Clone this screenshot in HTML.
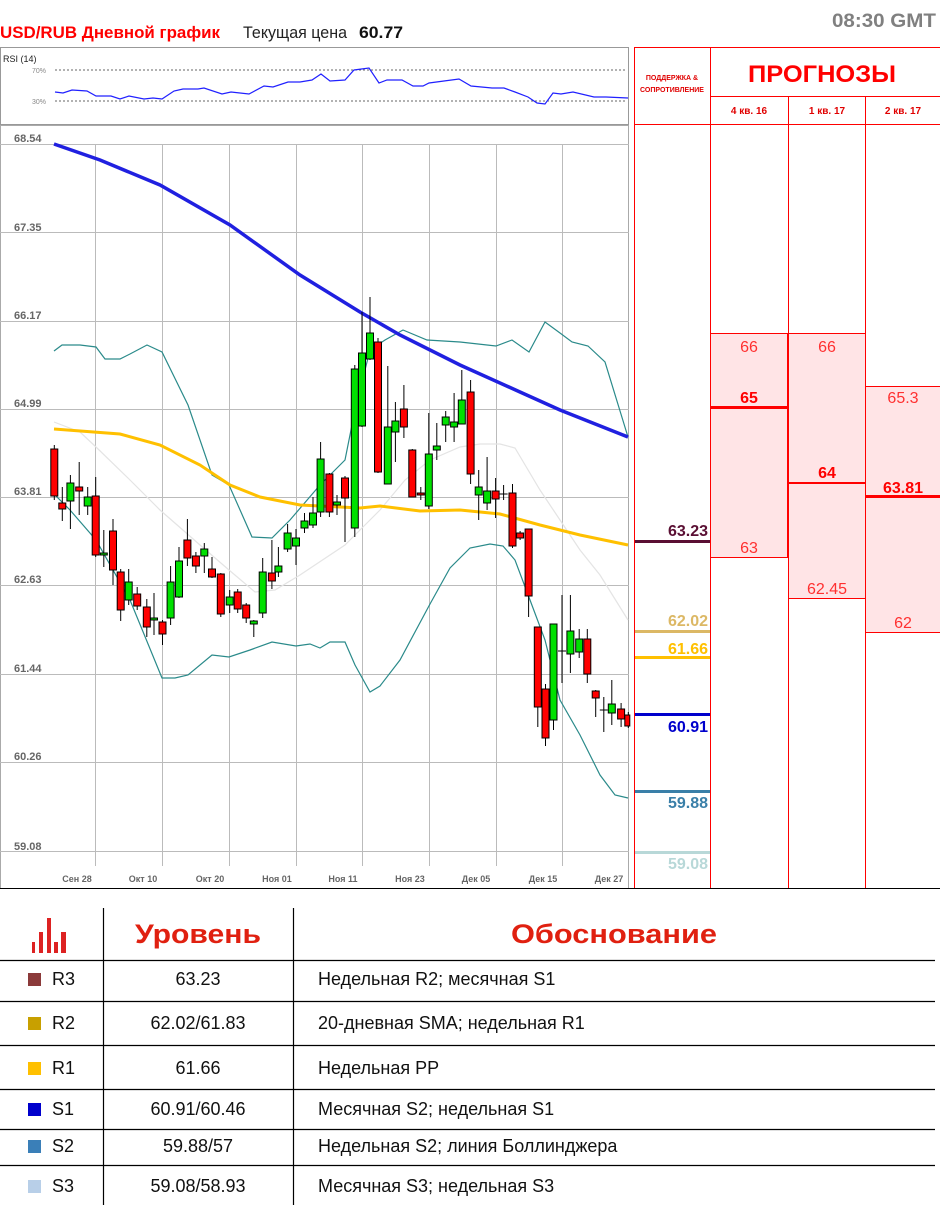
<!DOCTYPE html>
<html><head><meta charset="utf-8"><style>
html,body{margin:0;padding:0;background:#fff;width:940px;height:1209px;overflow:hidden}
svg{display:block}
text{font-family:"Liberation Sans","DejaVu Sans",sans-serif}
</style></head><body>
<svg width="940" height="1209" viewBox="0 0 940 1209" xmlns="http://www.w3.org/2000/svg">
<!-- header -->
<text x="0" y="38" font-size="17" font-weight="bold" fill="#ff0000" textLength="220" lengthAdjust="spacingAndGlyphs">USD/RUB Дневной график</text>
<text x="243" y="38" font-size="17" fill="#222" textLength="104" lengthAdjust="spacingAndGlyphs">Текущая цена</text>
<text x="359" y="38" font-size="17" font-weight="bold" fill="#111" textLength="44" lengthAdjust="spacingAndGlyphs">60.77</text>
<text x="936" y="27" font-size="19" font-weight="bold" fill="#808080" text-anchor="end" textLength="104" lengthAdjust="spacingAndGlyphs">08:30 GMT</text>

<!-- RSI panel -->
<rect x="0.5" y="47.5" width="628" height="77" fill="none" stroke="#999"/>
<text x="3" y="62" font-size="9" fill="#222">RSI (14)</text>
<text x="32" y="73" font-size="7" fill="#888">70%</text>
<text x="32" y="104" font-size="7" fill="#888">30%</text>
<line x1="55" y1="70" x2="626" y2="70" stroke="#666" stroke-dasharray="2,2"/>
<line x1="55" y1="101" x2="626" y2="101" stroke="#666" stroke-dasharray="2,2"/>
<polyline fill="none" stroke="#2020ff" stroke-width="1.2" points="55,92 63,93 72,90 87,91 96,96 111,96 120,99 129,96 144,99 153,98 162,99 174,91 183,89 198,89 204,88 222,94 231,92 249,94 264,86 273,87 288,82 300,82 312,80 321,74 330,81 345,80 354,70 369,68 379,83 387,80 402,80 413,86 423,86 429,83 444,81 459,79 471,86 492,88 504,88 515,92 528,97 537,103 545,104 553,93 561,94 573,92 594,97 606,97 628,98"/>

<!-- main chart box -->
<rect x="0.5" y="125.5" width="628" height="763" fill="none" stroke="#aaa"/>
<g stroke="#bbb" stroke-width="1">
<line x1="0" y1="144.5" x2="629" y2="144.5"/>
<line x1="0" y1="232.5" x2="629" y2="232.5"/>
<line x1="0" y1="321.5" x2="629" y2="321.5"/>
<line x1="0" y1="409.5" x2="629" y2="409.5"/>
<line x1="0" y1="497.5" x2="629" y2="497.5"/>
<line x1="0" y1="585.5" x2="629" y2="585.5"/>
<line x1="0" y1="674.5" x2="629" y2="674.5"/>
<line x1="0" y1="762.5" x2="629" y2="762.5"/>
<line x1="0" y1="851.5" x2="629" y2="851.5"/>
<line x1="95.5" y1="144" x2="95.5" y2="866"/>
<line x1="162.5" y1="144" x2="162.5" y2="866"/>
<line x1="229.5" y1="144" x2="229.5" y2="866"/>
<line x1="296.5" y1="144" x2="296.5" y2="866"/>
<line x1="362.5" y1="144" x2="362.5" y2="866"/>
<line x1="429.5" y1="144" x2="429.5" y2="866"/>
<line x1="496.5" y1="144" x2="496.5" y2="866"/>
<line x1="562.5" y1="144" x2="562.5" y2="866"/>
</g>
<g font-size="11" fill="#666" font-weight="bold">
<text x="14" y="142">68.54</text>
<text x="14" y="231">67.35</text>
<text x="14" y="319">66.17</text>
<text x="14" y="407">64.99</text>
<text x="14" y="495">63.81</text>
<text x="14" y="583">62.63</text>
<text x="14" y="672">61.44</text>
<text x="14" y="760">60.26</text>
<text x="14" y="850">59.08</text>
</g>
<g font-size="9" fill="#666" font-weight="bold" text-anchor="middle">
<text x="77" y="882">Сен 28</text>
<text x="143" y="882">Окт 10</text>
<text x="210" y="882">Окт 20</text>
<text x="277" y="882">Ноя 01</text>
<text x="343" y="882">Ноя 11</text>
<text x="410" y="882">Ноя 23</text>
<text x="476" y="882">Дек 05</text>
<text x="543" y="882">Дек 15</text>
<text x="609" y="882">Дек 27</text>
</g>

<!-- indicator lines -->
<polyline fill="none" stroke="#e4e4e4" stroke-width="1.2" points="54,422 80,432 96,447 130,480 160,510 200,545 229,570 255,592 275,590 300,575 330,555 345,545 360,530 380,510 405,480 430,460 460,447 480,444 500,444 515,448 540,490 560,520 580,550 600,575 628,620"/>
<polyline fill="none" stroke="#2a8a8a" stroke-width="1.2" points="54,351 62,345 80,345 96,347 105,359 120,359 130,354 147,345 162,352 188,405 212,475 229,485 252,537 272,538 290,520 320,485 345,460 355,410 370,350 385,340 403,330 427,340 460,342 496,346 512,340 529,352 545,322 560,333 572,342 588,346 605,362 628,437"/>
<polyline fill="none" stroke="#2a8a8a" stroke-width="1.2" points="54,494 70,510 96,540 130,600 162,678 175,678 188,675 212,655 229,657 250,650 272,642 296,646 310,644 320,648 330,642 345,642 355,665 370,692 380,686 400,660 430,604 450,568 470,548 490,544 503,546 515,560 530,600 545,640 560,700 580,735 600,775 615,795 628,798"/>
<polyline fill="none" stroke="#ffc000" stroke-width="3" points="54,429 120,434 160,445 200,465 230,485 260,497 300,505 360,508 380,506 420,511 460,510 500,514 540,525 580,535 628,545"/>
<polyline fill="none" stroke="#2020e0" stroke-width="3.5" points="54,144 100,160 160,185 230,225 300,275 360,312 400,335 460,365 520,392 560,410 628,437"/>

<!-- wicks -->
<path stroke="#000" stroke-width="1" fill="none" d="M54.3,445V500M62.3,487V521M70.4,475V529M79.2,462V515M87.7,487V515M95.7,477V557M103.8,530V567M113,519V585M120.7,569V621M128.7,569V605M137.2,587V610M146.8,599V637M154,593V635M162.5,620V645M170.6,566V625M179,547V598M187.4,519V566M195.9,552V573M204.3,543V573M212,557V578M220.8,573V617M229.7,590V613M237.7,589V613M246.2,603V623M253.8,620V637M262.7,558V618M271.9,540V589M278.4,547V577M287.6,524V552M296,529V565M304.5,513V533M313,497V528M320.6,442V517M329.4,473V517M337,495V515M345,476V542M354.8,365V537M362,312V427M370,297V360M378,338V473M387.8,366V484M395.4,402V462M403.9,385V438M412.3,449V497M420.8,487V500M428.8,413V509M436.8,423V460M445.7,411V442M454.1,393V442M461.8,370V424M470.6,380V484M478.7,470V520M487.1,457V510M495.6,478V518M503.6,485V500M499.6,494H507.6M512.5,484V548M520.1,531V540M528.6,529V617M537.8,627V727M545.5,684V746M553.5,624V730M562,595V683M558,651H566M570.4,595V673M579.2,629V658M587.3,629V683M595.7,690V717M603.8,697V732M599.8,710H607.8M611.8,680V725M621.1,703V727M628.3,712V728"/>
<!-- red bodies -->
<g fill="#ff0000" stroke="#000" stroke-width="1">
<rect x="50.8" y="449" width="7" height="47"/><rect x="58.8" y="503" width="7" height="6"/><rect x="75.7" y="487" width="7" height="4"/><rect x="92.2" y="496" width="7" height="59"/><rect x="109.5" y="531" width="7" height="39"/><rect x="117.2" y="572" width="7" height="38"/><rect x="133.7" y="594" width="7" height="12"/><rect x="143.3" y="607" width="7" height="20"/><rect x="159" y="622" width="7" height="12"/><rect x="183.9" y="540" width="7" height="18"/><rect x="192.4" y="556" width="7" height="10"/><rect x="208.5" y="569" width="7" height="8"/><rect x="217.3" y="574" width="7" height="40"/><rect x="234.2" y="592" width="7" height="17"/><rect x="242.7" y="605" width="7" height="13"/><rect x="268.4" y="573" width="7" height="8"/><rect x="325.9" y="474" width="7" height="38"/><rect x="341.5" y="478" width="7" height="20"/><rect x="374.5" y="342" width="7" height="130"/><rect x="400.4" y="409" width="7" height="18"/><rect x="408.8" y="450" width="7" height="47"/><rect x="417.3" y="493" width="7" height="2"/><rect x="467.1" y="392" width="7" height="82"/><rect x="492.1" y="491" width="7" height="8"/><rect x="509" y="493" width="7" height="53"/><rect x="516.6" y="533" width="7" height="5"/><rect x="525.1" y="529" width="7" height="67"/><rect x="534.3" y="627" width="7" height="80"/><rect x="542" y="689" width="7" height="49"/><rect x="583.8" y="639" width="7" height="35"/><rect x="592.2" y="691" width="7" height="7"/><rect x="617.6" y="709" width="7" height="10"/><rect x="624.8" y="715" width="5" height="11"/>
</g>
<!-- green bodies -->
<g fill="#00e000" stroke="#000" stroke-width="1">
<rect x="66.9" y="483" width="7" height="18"/><rect x="84.2" y="497" width="7" height="9"/><rect x="100.3" y="553" width="7" height="2"/><rect x="125.2" y="582" width="7" height="18"/><rect x="150.5" y="618" width="7" height="2"/><rect x="167.1" y="582" width="7" height="36"/><rect x="175.5" y="561" width="7" height="36"/><rect x="200.8" y="549" width="7" height="7"/><rect x="226.2" y="597" width="7" height="8"/><rect x="250.3" y="621" width="7" height="3"/><rect x="259.2" y="572" width="7" height="41"/><rect x="274.9" y="566" width="7" height="6"/><rect x="284.1" y="533" width="7" height="16"/><rect x="292.5" y="538" width="7" height="8"/><rect x="301" y="521" width="7" height="7"/><rect x="309.5" y="513" width="7" height="12"/><rect x="317.1" y="459" width="7" height="53"/><rect x="333.5" y="502" width="7" height="3"/><rect x="351.3" y="369" width="7" height="159"/><rect x="358.5" y="353" width="7" height="73"/><rect x="366.5" y="333" width="7" height="26"/><rect x="384.3" y="427" width="7" height="57"/><rect x="391.9" y="421" width="7" height="11"/><rect x="425.3" y="454" width="7" height="52"/><rect x="433.3" y="446" width="7" height="4"/><rect x="442.2" y="417" width="7" height="8"/><rect x="450.6" y="422" width="7" height="5"/><rect x="458.3" y="400" width="7" height="24"/><rect x="475.2" y="487" width="7" height="8"/><rect x="483.6" y="491" width="7" height="12"/><rect x="550" y="624" width="7" height="96"/><rect x="566.9" y="631" width="7" height="23"/><rect x="575.7" y="639" width="7" height="13"/><rect x="608.3" y="704" width="7" height="9"/>
</g>

<!-- right panel -->
<rect x="710.5" y="333.5" width="77" height="224" fill="#ffe4e6" stroke="#ff0000"/>
<rect x="788.5" y="333.5" width="77" height="265" fill="#ffe4e6" stroke="#ff0000"/>
<rect x="865.5" y="386.5" width="76" height="246" fill="#ffe4e6" stroke="#ff0000"/>
<g stroke="#ff0000" stroke-width="1">
<line x1="634.5" y1="47" x2="634.5" y2="888"/>
<line x1="710.5" y1="47" x2="710.5" y2="888"/>
<line x1="788.5" y1="96" x2="788.5" y2="888"/>
<line x1="865.5" y1="96" x2="865.5" y2="888"/>
<line x1="634" y1="47.5" x2="940" y2="47.5"/>
<line x1="710" y1="96.5" x2="940" y2="96.5"/>
<line x1="634" y1="124.5" x2="940" y2="124.5"/>
</g>
<line x1="0" y1="888.5" x2="940" y2="888.5" stroke="#000" stroke-width="1"/>
<text x="672" y="80" font-size="7" font-weight="bold" fill="#e00000" text-anchor="middle">ПОДДЕРЖКА &amp;</text>
<text x="672" y="92" font-size="7" font-weight="bold" fill="#e00000" text-anchor="middle">СОПРОТИВЛЕНИЕ</text>
<text x="822" y="82" font-size="24" font-weight="bold" fill="#ff0000" text-anchor="middle" textLength="148" lengthAdjust="spacingAndGlyphs">ПРОГНОЗЫ</text>
<g font-size="10" font-weight="bold" fill="#e00000" text-anchor="middle">
<text x="749" y="114">4 кв. 16</text>
<text x="827" y="114">1 кв. 17</text>
<text x="903" y="114">2 кв. 17</text>
</g>
<g font-size="16" fill="#ff3030" text-anchor="middle">
<text x="749" y="352">66</text>
<text x="749" y="553">63</text>
<text x="827" y="352">66</text>
<text x="827" y="594">62.45</text>
<text x="903" y="403">65.3</text>
<text x="903" y="628">62</text>
</g>
<g font-size="16" font-weight="bold" fill="#ff0000" text-anchor="middle">
<text x="749" y="403">65</text>
<text x="827" y="478">64</text>
<text x="903" y="493">63.81</text>
</g>
<rect x="711" y="406" width="77" height="3" fill="#ff0000"/>
<rect x="789" y="482" width="76" height="2" fill="#ff0000"/>
<rect x="866" y="495" width="74" height="3" fill="#ff0000"/>

<!-- S/R levels -->
<rect x="635" y="540" width="75" height="3" fill="#5a0f33"/>
<rect x="635" y="630" width="75" height="3" fill="#dcb865"/>
<rect x="635" y="656" width="75" height="3" fill="#ffc000"/>
<rect x="635" y="713" width="75" height="3" fill="#0000cc"/>
<rect x="635" y="790" width="75" height="3" fill="#3a7fa8"/>
<rect x="635" y="851" width="75" height="3" fill="#b8d8d8"/>
<g font-size="16" font-weight="bold" text-anchor="end">
<text x="708" y="536" fill="#5a0f33">63.23</text>
<text x="708" y="626" fill="#dcb865">62.02</text>
<text x="708" y="654" fill="#ffc000">61.66</text>
<text x="708" y="732" fill="#0000cc">60.91</text>
<text x="708" y="808" fill="#3a7fa8">59.88</text>
<text x="708" y="869" fill="#b8d8d8">59.08</text>
</g>

<!-- bottom table -->
<g stroke="#000" stroke-width="1.2">
<line x1="103.5" y1="908" x2="103.5" y2="1205"/>
<line x1="293.5" y1="908" x2="293.5" y2="1205"/>
<line x1="0" y1="960.5" x2="935" y2="960.5"/>
<line x1="0" y1="1001.5" x2="935" y2="1001.5"/>
<line x1="0" y1="1045.5" x2="935" y2="1045.5"/>
<line x1="0" y1="1089.5" x2="935" y2="1089.5"/>
<line x1="0" y1="1129.5" x2="935" y2="1129.5"/>
<line x1="0" y1="1165.5" x2="935" y2="1165.5"/>
</g>
<g fill="#dd2222">
<rect x="32" y="942" width="3" height="11"/><rect x="39" y="932" width="4" height="21"/><rect x="47" y="918" width="4" height="35"/><rect x="54" y="942" width="4" height="11"/><rect x="61" y="932" width="5" height="21"/>
</g>
<text x="198" y="943" font-size="27" font-weight="bold" fill="#e02010" text-anchor="middle" textLength="126" lengthAdjust="spacingAndGlyphs">Уровень</text>
<text x="614" y="943" font-size="27" font-weight="bold" fill="#e02010" text-anchor="middle" textLength="206" lengthAdjust="spacingAndGlyphs">Обоснование</text>
<rect x="28" y="973" width="13" height="13" fill="#8b3a3a"/>
<rect x="28" y="1017" width="13" height="13" fill="#c8a000"/>
<rect x="28" y="1062" width="13" height="13" fill="#ffc000"/>
<rect x="28" y="1103" width="13" height="13" fill="#0000cc"/>
<rect x="28" y="1140" width="13" height="13" fill="#3a7fb8"/>
<rect x="28" y="1180" width="13" height="13" fill="#b8cfe8"/>
<g font-size="18" fill="#111">
<text x="52" y="985">R3</text>
<text x="52" y="1029">R2</text>
<text x="52" y="1074">R1</text>
<text x="52" y="1115">S1</text>
<text x="52" y="1152">S2</text>
<text x="52" y="1192">S3</text>
</g>
<g font-size="18" fill="#111" text-anchor="middle">
<text x="198" y="985">63.23</text>
<text x="198" y="1029">62.02/61.83</text>
<text x="198" y="1074">61.66</text>
<text x="198" y="1115">60.91/60.46</text>
<text x="198" y="1152">59.88/57</text>
<text x="198" y="1192">59.08/58.93</text>
</g>
<g font-size="18" fill="#111">
<text x="318" y="985">Недельная R2; месячная S1</text>
<text x="318" y="1029">20-дневная SMA; недельная R1</text>
<text x="318" y="1074">Недельная PP</text>
<text x="318" y="1115">Месячная S2; недельная S1</text>
<text x="318" y="1152">Недельная S2; линия Боллинджера</text>
<text x="318" y="1192">Месячная S3; недельная S3</text>
</g>
</svg>
</body></html>
